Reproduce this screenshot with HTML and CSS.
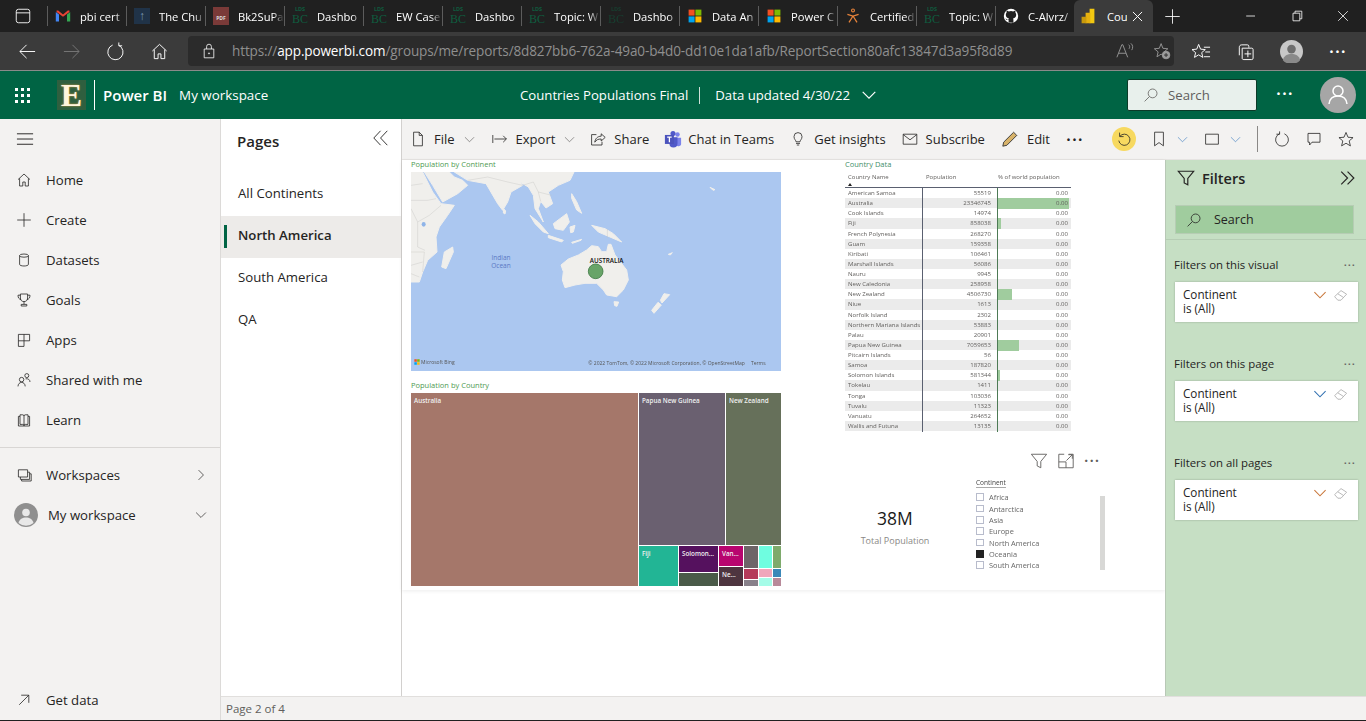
FILE: index.html
```html
<!DOCTYPE html>
<html lang="en">
<head>
    <meta charset="UTF-8">
    <meta name="viewport" content="width=device-width, initial-scale=1.0">
    <title>Countries Populations Final - Power BI</title>
    <link rel="stylesheet" href="styles.css">
</head>
<body>
    <svg class="sprite" xmlns="http://www.w3.org/2000/svg">
        <symbol id="i-home" viewBox="0 0 20 20"><path d="M2.5 9.5 10 2.5l7.500 7M4.500 8v9.500h4v-5h3v5h4V8"/></symbol>
        <symbol id="i-plus" viewBox="0 0 20 20"><path d="M10 1.500v17M1.500 10h17"/></symbol>
        <symbol id="i-db" viewBox="0 0 20 20"><ellipse cx="10" cy="4.500" rx="5.500" ry="2"/><path d="M4.500 4.500v11c0 1.200 2.500 2 5.500 2s5.500-.8 5.500-2v-11"/></symbol>
        <symbol id="i-trophy" viewBox="0 0 20 20"><path d="M5.500 2.500h9v5c0 3-2 4.500-4.500 4.500S5.500 10.500 5.500 7.500zM5.500 4H2.500c0 3 1 5 4 5.500M14.500 4h3c0 3-1 5-4 5.500M10 12v3M6.500 15.500h7v2h-7z"/></symbol>
        <symbol id="i-apps" viewBox="0 0 20 20"><path d="M3 3h14v8H10v7H3zM3 11h7M10 3v8"/></symbol>
        <symbol id="i-shared" viewBox="0 0 20 20"><circle cx="13.500" cy="4.500" r="2.500"/><circle cx="7" cy="9.500" r="2.800"/><path d="M2.500 18c0-3 2-5 4.500-5s4.500 2 4.500 5M12 8.500c3-.5 5.500 1 5.500 4"/></symbol>
        <symbol id="i-book" viewBox="0 0 20 20"><path d="M5 3.500h3.500c.8 0 1.500.5 1.500 1.500v12c0-1-.7-1.500-1.500-1.500H5zM15 3.500h-3.500c-.8 0-1.500.5-1.500 1.500M15 3.500v12h-3.500c-.8 0-1.500.5-1.500 1.500M5 5.500H3V17.500h14V5.500h-2"/></symbol>
        <symbol id="i-work" viewBox="0 0 20 20"><path d="M3 3.500h11.500v9H3zM5.500 12.500v3H17v-9h-2.500M7 15.500v2h12v-9h-2"/></symbol>
        <symbol id="i-getdata" viewBox="0 0 20 20"><path d="M4 16 16 4M6.500 4H16v9.500"/></symbol>
        <symbol id="i-right" viewBox="0 0 20 20"><path d="M6.500 3 13.500 10l-7 7"/></symbol>
        <symbol id="i-down" viewBox="0 0 20 20"><path d="M3 6.500 10 13.500l7-7"/></symbol>
        <symbol id="i-left2" viewBox="0 0 20 20"><path d="M9.500 2 2 10l7.500 8M17 2 9.500 10l7.500 8"/></symbol>
        <symbol id="i-right2" viewBox="0 0 20 20"><path d="M2.500 3 9.500 10l-7 7M9.500 3 16.500 10l-7 7"/></symbol>
        <symbol id="i-file" viewBox="0 0 20 20"><path d="M4.500 1.500h7l4 4v13h-11zM11.500 1.500v4h4"/></symbol>
        <symbol id="i-export" viewBox="0 0 20 20"><path d="M1 5v10M3 10h15M14 6l4 4-4 4"/></symbol>
        <symbol id="i-share" viewBox="0 0 20 20"><path d="M14 3.500 19 8l-5 4.500V10c-4 0-6 1-8 4 .5-4.500 3.500-7.500 8-7.500zM8 4.500H2v13h13v-4"/></symbol>
        <symbol id="i-bulb" viewBox="0 0 20 20"><path d="M7.500 13.500c0-2-2.500-3-2.500-6.500a5 5 0 0 1 10 0c0 3.500-2.500 4.500-2.500 6.500zM7.500 15.500h5M8.500 17.500h3"/></symbol>
        <symbol id="i-mail" viewBox="0 0 20 20"><path d="M1.500 4h17v12.500h-17zM1.500 4.500 10 11l8.500-6.500"/></symbol>
        <symbol id="i-undo" viewBox="0 0 20 20"><path d="M5 6.500A7 7 0 1 1 3.500 12M4.500 2v5h5"/></symbol>
        <symbol id="i-bookmark" viewBox="0 0 20 20"><path d="M4.500 1.500h11v17L10 14.500l-5.500 4z"/></symbol>
        <symbol id="i-rect" viewBox="0 0 20 20"><path d="M2 4h16v12.500H2z"/></symbol>
        <symbol id="i-refresh" viewBox="0 0 20 20"><path d="M13 3.500a8 8 0 1 1-6 0M7 .5v3.500h-4"/></symbol>
        <symbol id="i-comment" viewBox="0 0 20 20"><path d="M2.500 3h15v11h-10l-3 3.500V14h-2z"/></symbol>
        <symbol id="i-star" viewBox="0 0 20 20"><path d="M10 1.800 12.500 7.800l6.300.5-4.800 4.100 1.500 6.200L10 15.300l-5.500 3.300L6 12.400 1.200 8.300l6.300-.5z"/></symbol>
        <symbol id="i-funnel" viewBox="0 0 20 20"><path d="M1.500 2.500h17l-6.500 8v7l-4-2v-5z"/></symbol>
        <symbol id="i-search" viewBox="0 0 20 20"><circle cx="12" cy="8" r="5.500"/><path d="M8 12 2 18"/></symbol>
        <symbol id="i-eraser" viewBox="0 0 20 20"><path d="M2 12 10 4.500l7 4.500-7 7.500H6zM6 8.500l7 4.500"/></symbol>
        <symbol id="i-expand" viewBox="0 0 20 20"><path d="M8 2.500H2v15h16v-15h-5M2 11h8v6.500M10.500 9.500 17 3M12.500 3H17v4.500"/></symbol>
        <symbol id="i-back" viewBox="0 0 20 20"><path d="M18 10H2M9 3l-7 7 7 7"/></symbol>
        <symbol id="i-fwd" viewBox="0 0 20 20"><path d="M2 10h16M11 3l7 7-7 7"/></symbol>
        <symbol id="i-reload" viewBox="0 0 20 20"><path d="M13.500 3.500a8 8 0 1 1-6.500-.3M13.500 .5v3.500h3.500"/></symbol>
        <symbol id="i-lock" viewBox="0 0 20 20"><path d="M4 7.500h12v11H4zM7 7.500V4.500a3 3 0 0 1 6 0v3"/><circle cx="10" cy="13" r=".7"/></symbol>
        <symbol id="i-favadd" viewBox="0 0 20 20"><path d="M9 1.800 11 7l5.500.5-4.200 3.500 1.300 5.400L9 13.500l-4.600 2.900 1.300-5.400L1.500 7.500 7 7z"/><circle fill="#9b9b9b" cx="14.500" cy="14.500" r="4.200"/><path stroke="#2b2b2b" d="M14.500 12.300v4.400M12.300 14.500h4.400"/></symbol>
        <symbol id="i-favs" viewBox="0 0 20 20"><path d="M7 2.500 9 7.500l5 .5-3.800 3.200 1.200 5L7 13.500l-4.400 2.700 1.200-5L0 8l5-.5zM12.500 5.500H19M14 10.500h5M12.500 15.500H19"/></symbol>
        <symbol id="i-coll" viewBox="0 0 20 20"><path d="M6 3h6c1 0 1.500.5 1.500 1.500V6M3.500 14V5.500C3.500 4 4.500 3 6 3M6.500 6.500h10c1 0 1.500.5 1.500 1.500v9c0 1-.5 1.500-1.500 1.500h-8C7 18.500 6.500 18 6.500 17zM12.500 9v7M9 12.500h7"/></symbol>
        <symbol id="i-read" viewBox="0 0 20 20"><path d="M1 17 6.500 3h1L13 17M3 12.500h8M14 3c1.500 1 1.500 3 .5 4.500M16.500 1.500c2.500 2 2.500 5 1 7.500"/></symbol>
        <symbol id="i-tabs" viewBox="0 0 20 20"><path d="M5 2.500h10A2.500 2.500 0 0 1 17.500 5v10a2.500 2.500 0 0 1-2.500 2.500H5A2.500 2.500 0 0 1 2.500 15V5A2.500 2.500 0 0 1 5 2.500zM2.500 6.500h15"/></symbol>
        <symbol id="i-ms" viewBox="0 0 20 20"><path fill="#f25022" stroke="none" d="M2 2h7.500v7.500H2z"/><path fill="#7fba00" stroke="none" d="M10.500 2H18v7.500h-7.500z"/><path fill="#00a4ef" stroke="none" d="M2 10.500h7.500V18H2z"/><path fill="#ffb900" stroke="none" d="M10.500 10.500H18V18h-7.500z"/></symbol>
    </svg>

    <div class="tabbar">
        <svg class="ic tab-actions"><use href="#i-tabs"/></svg>
        <div class="tab">
            <svg class="favicon" viewBox="0 0 20 20"><path fill="#ea4335" d="M2 5l8 6 8-6v-2l-2 0-6 5-6-5-2 0z"/><path fill="#4285f4" d="M1 5v12h4V8z"/><path fill="#34a853" d="M15 8v9h4V5z"/></svg>
            <span class="tab-text">pbi cert</span>
        </div>
        <div class="tab">
            <span class="fav-church">&#8593;</span>
            <span class="tab-text">The Chu</span>
        </div>
        <div class="tab">
            <span class="fav-pdf">PDF</span>
            <span class="tab-text">Bk2SuPa</span>
        </div>
        <div class="tab"><span class="fav-lds"><b>LDS</b><i>BC</i></span><span class="tab-text">Dashbo</span></div>
        <div class="tab"><span class="fav-lds"><b>LDS</b><i>BC</i></span><span class="tab-text">EW Case</span></div>
        <div class="tab"><span class="fav-lds"><b>LDS</b><i>BC</i></span><span class="tab-text">Dashbo</span></div>
        <div class="tab"><span class="fav-lds"><b>LDS</b><i>BC</i></span><span class="tab-text">Topic: W</span></div>
        <div class="tab"><span class="fav-lds dim"><b>LDS</b><i>BC</i></span><span class="tab-text">Dashbo</span></div>
        <div class="tab"><svg class="favicon"><use href="#i-ms"/></svg><span class="tab-text">Data An</span></div>
        <div class="tab"><svg class="favicon"><use href="#i-ms"/></svg><span class="tab-text">Power C</span></div>
        <div class="tab">
            <svg class="favicon" viewBox="0 0 20 20"><circle cx="10" cy="3" r="1.800" fill="none" stroke="#e8833a" stroke-width="1.400"/><path fill="none" stroke="#e8833a" stroke-width="1.600" d="M3 8l7 2 7-2M10 10l-5 8M10 10l5 8"/></svg>
            <span class="tab-text">Certified</span>
        </div>
        <div class="tab"><span class="fav-lds"><b>LDS</b><i>BC</i></span><span class="tab-text">Topic: W</span></div>
        <div class="tab">
            <svg class="favicon" viewBox="0 0 20 20"><circle cx="10" cy="10" r="9" fill="#fff"/><path fill="#202020" d="M7 18v-3c-3 .5-3.500-1-4-2 2 .5 2 2 4 1.500 0-1 .5-1.500.5-1.500-2.500-.5-4-1.500-4-4.500 0-1 .5-2 1-2.500-.2-.8-.2-1.800.2-2.500 1 0 2 .7 2.500 1a7 7 0 0 1 5.600 0c.5-.3 1.500-1 2.500-1 .4.700.4 1.700.2 2.500.5.500 1 1.500 1 2.500 0 3-1.500 4-4 4.500 0 0 .5.500.5 1.500v4z"/></svg>
            <span class="tab-text">C-Alvrz/</span>
        </div>
        <div class="tab tab-active">
            <svg class="favicon" viewBox="0 0 20 20"><path fill="#f2c811" d="M12 1h6v18h-6z"/><path fill="#e6b10f" d="M7 6h6v13H7z"/><path fill="#c99a0c" d="M2 11h6v8H2z"/></svg>
            <span class="tab-text">Cou</span>
            <svg class="ic tab-close" viewBox="0 0 20 20"><path d="M3 3l14 14M17 3 3 17"/></svg>
        </div>
        <svg class="ic new-tab"><use href="#i-plus"/></svg>
        <div class="window-btns">
            <svg class="ic" viewBox="0 0 20 20"><path d="M4 10h11"/></svg>
            <svg class="ic" viewBox="0 0 20 20"><path d="M5 6.500h8.500V16H5zM7.500 6.500V4h8.500v9.500h-2.500"/></svg>
            <svg class="ic" viewBox="0 0 20 20"><path d="M4 4l12 12M16 4 4 16"/></svg>
        </div>
    </div>

    <div class="addressbar">
        <svg class="ic nav-btn"><use href="#i-back"/></svg>
        <svg class="ic nav-btn off"><use href="#i-fwd"/></svg>
        <svg class="ic nav-btn"><use href="#i-reload"/></svg>
        <svg class="ic nav-btn"><use href="#i-home"/></svg>
        <div class="urlbox">
            <svg class="ic lock"><use href="#i-lock"/></svg>
            <span class="url"><span>https://</span><b>app.powerbi.com</b><span>/groups/me/reports/8d827bb6-762a-49a0-b4d0-dd10e1da1afb/ReportSection80afc13847d3a95f8d89</span></span>
            <svg class="ic url-ic"><use href="#i-read"/></svg>
            <svg class="ic url-ic"><use href="#i-favadd"/></svg>
        </div>
        <svg class="ic bar-ic"><use href="#i-favs"/></svg>
        <svg class="ic bar-ic"><use href="#i-coll"/></svg>
        <svg class="bar-avatar" viewBox="0 0 24 24"><circle cx="12" cy="12" r="12" fill="#c8c8c8"/><circle cx="12" cy="9.500" r="4.500" fill="#6e6e6e"/><path fill="#8a8a8a" d="M3 21c1-5 5-6.500 9-6.500s8 1.500 9 6.500a12 12 0 0 1-18 0z"/></svg>
        <span class="bar-dots">&#183;&#183;&#183;</span>
    </div>

    <header class="appbar">
        <div class="waffle">
            <i></i><i></i><i></i><i></i><i></i><i></i><i></i><i></i><i></i>
        </div>
        <div class="org-logo"><span>E</span></div>
        <span class="brand">Power BI</span>
        <span class="crumb">My workspace</span>
        <div class="report-name">
            <span>Countries Populations Final</span>
            <span class="name-sep"></span>
            <span>Data updated 4/30/22</span>
            <svg class="ic"><use href="#i-down"/></svg>
        </div>
        <div class="app-search">
            <svg class="ic"><use href="#i-search"/></svg>
            <span>Search</span>
        </div>
        <span class="app-dots">&#183;&#183;&#183;</span>
        <svg class="app-avatar" viewBox="0 0 36 36"><circle cx="18" cy="18" r="18" fill="#a6a6a6"/><circle cx="18" cy="14" r="5" fill="none" stroke="#fff" stroke-width="1.500"/><path fill="none" stroke="#fff" stroke-width="1.500" d="M9 27c.5-5 4-8 9-8s8.500 3 9 8"/></svg>
    </header>

    <div class="workarea">
        <nav class="leftnav">
            <svg class="ic burger" viewBox="0 0 20 20"><path d="M1 4h17M1 9.500h17M1 15h17"/></svg>
            <a class="nav-item"><svg class="ic"><use href="#i-home"/></svg>Home</a>
            <a class="nav-item"><svg class="ic"><use href="#i-plus"/></svg>Create</a>
            <a class="nav-item"><svg class="ic"><use href="#i-db"/></svg>Datasets</a>
            <a class="nav-item"><svg class="ic"><use href="#i-trophy"/></svg>Goals</a>
            <a class="nav-item"><svg class="ic"><use href="#i-apps"/></svg>Apps</a>
            <a class="nav-item"><svg class="ic"><use href="#i-shared"/></svg>Shared with me</a>
            <a class="nav-item"><svg class="ic"><use href="#i-book"/></svg>Learn</a>
            <div class="nav-divider"></div>
            <a class="nav-item"><svg class="ic"><use href="#i-work"/></svg>Workspaces<svg class="ic nav-chev"><use href="#i-right"/></svg></a>
            <a class="nav-item"><svg class="nav-avatar" viewBox="0 0 24 24"><circle cx="12" cy="12" r="12" fill="#8f8f8f"/><circle cx="12" cy="9.500" r="3.800" fill="#e8e8e8"/><path fill="#e8e8e8" d="M4.500 20c1-4 4-5.500 7.500-5.500s6.500 1.500 7.500 5.500a12 12 0 0 1-15 0z"/></svg>My workspace<svg class="ic nav-chev"><use href="#i-down"/></svg></a>
            <a class="nav-item nav-bottom"><svg class="ic"><use href="#i-getdata"/></svg>Get data</a>
        </nav>

        <div class="rightcol">
            <div class="panes">
                <aside class="pages">
                    <div class="pages-head">
                        <span>Pages</span>
                        <svg class="ic"><use href="#i-left2"/></svg>
                    </div>
                    <a class="page-item">All Continents</a>
                    <a class="page-item active">North America</a>
                    <a class="page-item">South America</a>
                    <a class="page-item">QA</a>
                </aside>

                <div class="contentcol">
                    <div class="toolbar">
                        <a class="tool"><svg class="ic"><use href="#i-file"/></svg>File<svg class="ic tool-chev"><use href="#i-down"/></svg></a>
                        <a class="tool"><svg class="ic"><use href="#i-export"/></svg>Export<svg class="ic tool-chev"><use href="#i-down"/></svg></a>
                        <a class="tool tool-share"><svg class="ic"><use href="#i-share"/></svg>Share</a>
                        <a class="tool tool-teams">
                            <svg class="teams" viewBox="0 0 20 20"><circle cx="15" cy="5" r="2.500" fill="#7b83eb"/><path fill="#7b83eb" d="M11 8.500h8v6a3 3 0 0 1-6 1z"/><circle cx="10" cy="4" r="2.800" fill="#5059c9"/><path fill="#5059c9" d="M6 8h9v7a4 4 0 0 1-9 0z"/><path fill="#4b53bc" d="M1 5.500h10v10H1z"/><path fill="none" stroke="#fff" stroke-width="1.400" d="M3.500 8H8.500M6 8v5.500"/></svg>
                            Chat in Teams
                        </a>
                        <a class="tool"><svg class="ic"><use href="#i-bulb"/></svg>Get insights</a>
                        <a class="tool"><svg class="ic"><use href="#i-mail"/></svg>Subscribe</a>
                        <a class="tool">
                            <svg class="pencil" viewBox="0 0 20 20"><path fill="#d8b36a" stroke="#333" d="M14 2.500 17.500 6 6.500 17 2 18l1-4.500z"/></svg>
                            Edit
                        </a>
                        <span class="tool-dots">&#183;&#183;&#183;</span>
                        <div class="toolbar-right">
                            <span class="undo"><svg class="ic"><use href="#i-undo"/></svg></span>
                            <svg class="ic"><use href="#i-bookmark"/></svg>
                            <svg class="ic tool-chev blue"><use href="#i-down"/></svg>
                            <svg class="ic"><use href="#i-rect"/></svg>
                            <svg class="ic tool-chev blue"><use href="#i-down"/></svg>
                            <span class="tool-sep"></span>
                            <svg class="ic"><use href="#i-refresh"/></svg>
                            <svg class="ic"><use href="#i-comment"/></svg>
                            <svg class="ic"><use href="#i-star"/></svg>
                        </div>
                    </div>

                    <div class="report-row">
                        <main class="canvas">
                            <div class="page-sheet">
                                <section class="col-left">
                                    <div class="visual-title">Population by Continent</div>
                                    <div class="map">
                                        <svg viewBox="18 51 1110 597" preserveAspectRatio="none">
                                            <rect x="18" y="51" width="1110" height="597" fill="#abc7f0"/>
                                            <g class="land">
                                                <path d="M18 51H53L68 81 83 111 108 146 148 151 128 181 103 216 93 246 96 291 68 316 53 351 43 381H18z"/>
                                                <path d="M58 51 83 91 113 141 158 116 188 91 173 76 148 66 133 51z"/>
                                                <path d="M148 51 188 76 243 86 278 146 293 166 308 141 318 111 353 91 345 81 370 96 385 121 390 161 415 201 400 161 407 139 423 159 443 146 430 111 460 91 495 76 507 51z"/>
                                                <path d="M143 276 145 291 123 341 110 336 118 291z"/>
                                                <path d="M296 161 302 168 300 177 295 174z"/>
                                                <path d="M375 181 400 201 430 236 415 231 390 206z"/>
                                                <path d="M430 241 475 256 470 261 430 248z"/>
                                                <path d="M445 206 485 176 493 201 475 226 450 221z"/>
                                                <path d="M495 216 510 211 505 231 497 233z"/>
                                                <path d="M500 116 515 140 530 175 515 165 500 130z"/>
                                                <path d="M560 211 600 221 625 236 650 261 615 246 580 231z"/>
                                                <path d="M468 330 490 312 520 300 545 285 560 272 580 275 590 290 605 290 610 268 618 268 630 300 665 345 670 375 655 405 635 425 605 420 595 405 575 385 540 385 510 390 480 398 472 375 475 350z"/>
                                                <path d="M627 440 641 441 636 454 629 452z"/>
                                                <path d="M777 416 794 419 771 444 766 436z"/>
                                                <path d="M759 442 769 450 747 475 740 466z"/>
                                                <path d="M915 97 930 104 924 106z"/>
                                                <path d="M790 298 802 293 796 300z"/>
                                                <path d="M500 262 530 253 528 256 502 265z"/>
                                            </g>
                                            <g class="borders">
                                                <path d="M18 91 53 86M18 136H68L93 131M38 201 73 181 108 151M18 161 38 201 38 276 60 286M18 291H58L53 351M18 331 53 321M18 356 43 366"/>
                                                <path d="M188 76 248 66 308 81 353 91M353 91 385 81 400 111 440 121M400 111 407 139M607 222V250"/>
                                            </g>
                                            <ellipse cx="56" cy="208" rx="6" ry="7" fill="#8fb4e8"/>
                                            <text class="map-ocean" x="288" y="315" text-anchor="middle">Indian</text>
                                            <text class="map-ocean" x="288" y="338" text-anchor="middle">Ocean</text>
                                            <text class="map-label" x="605" y="325" text-anchor="middle">AUSTRALIA</text>
                                            <circle cx="572" cy="349" r="22" fill="#68a468" stroke="#3f7a44" stroke-width="2.500"/>
                                            <use href="#i-ms" x="26" y="611" width="20" height="20"/>
                                            <text class="map-small" x="48" y="626">Microsoft Bing</text>
                                            <text class="map-small" x="550" y="630">&#169; 2022 TomTom, &#169; 2022 Microsoft Corporation, &#169; OpenStreetMap</text>
                                            <text class="map-small" x="1038" y="630">Terms</text>
                                        </svg>
                                    </div>
                                    <div class="visual-title second">Population by Country</div>
                                    <div class="treemap">
                                        <div class="tile t-australia"><span>Australia</span></div>
                                        <div class="tm-right">
                                            <div class="tm-top">
                                                <div class="tile t-png"><span>Papua New Guinea</span></div>
                                                <div class="tile t-nz"><span>New Zealand</span></div>
                                            </div>
                                            <div class="tm-bottom">
                                                <div class="tile t-fiji"><span>Fiji</span></div>
                                                <div class="tm-stack t-w40">
                                                    <div class="tile t-solomon"><span>Solomon...</span></div>
                                                    <div class="tile t-samoa"></div>
                                                </div>
                                                <div class="tm-stack t-w24">
                                                    <div class="tile t-van"><span>Van...</span></div>
                                                    <div class="tile t-ne"><span>Ne...</span></div>
                                                </div>
                                                <div class="tm-stack t-w15">
                                                    <div class="tile t-a"></div>
                                                    <div class="tile t-b"></div>
                                                    <div class="tile t-c"></div>
                                                </div>
                                                <div class="tm-stack t-w13">
                                                    <div class="tile t-d"></div>
                                                    <div class="tile t-e"></div>
                                                    <div class="tile t-f"></div>
                                                </div>
                                                <div class="tm-stack t-w8">
                                                    <div class="tile t-g"></div>
                                                    <div class="tile t-h"></div>
                                                    <div class="tile t-i"></div>
                                                </div>
                                            </div>
                                        </div>
                                    </div>
                                </section>

                                <section class="col-right">
                                    <div class="visual-title teal">Country Data</div>
                                    <div class="table-head">
                                        <span>Country Name</span><span>Population</span><span>% of world population</span>
                                        <i class="sort-arrow"></i>
                                    </div>
                                    <div class="table-body">
                                        <div class="row"><span>American Samoa</span><span>55519</span><span class="pct">0.00</span></div>
                                        <div class="row"><span>Australia</span><span>23346745</span><span class="pct"><i class="bar" style="width:71px"></i>0.00</span></div>
                                        <div class="row"><span>Cook Islands</span><span>14974</span><span class="pct">0.00</span></div>
                                        <div class="row"><span>Fiji</span><span>858038</span><span class="pct"><i class="bar" style="width:3px"></i>0.00</span></div>
                                        <div class="row"><span>French Polynesia</span><span>268270</span><span class="pct">0.00</span></div>
                                        <div class="row"><span>Guam</span><span>159358</span><span class="pct">0.00</span></div>
                                        <div class="row"><span>Kiribati</span><span>106461</span><span class="pct">0.00</span></div>
                                        <div class="row"><span>Marshall Islands</span><span>56086</span><span class="pct">0.00</span></div>
                                        <div class="row"><span>Nauru</span><span>9945</span><span class="pct">0.00</span></div>
                                        <div class="row"><span>New Caledonia</span><span>258958</span><span class="pct">0.00</span></div>
                                        <div class="row"><span>New Zealand</span><span>4506730</span><span class="pct"><i class="bar" style="width:14px"></i>0.00</span></div>
                                        <div class="row"><span>Niue</span><span>1613</span><span class="pct">0.00</span></div>
                                        <div class="row"><span>Norfolk Island</span><span>2302</span><span class="pct">0.00</span></div>
                                        <div class="row"><span>Northern Mariana Islands</span><span>53883</span><span class="pct">0.00</span></div>
                                        <div class="row"><span>Palau</span><span>20901</span><span class="pct">0.00</span></div>
                                        <div class="row"><span>Papua New Guinea</span><span>7059653</span><span class="pct"><i class="bar" style="width:21px"></i>0.00</span></div>
                                        <div class="row"><span>Pitcairn Islands</span><span>56</span><span class="pct">0.00</span></div>
                                        <div class="row"><span>Samoa</span><span>187820</span><span class="pct">0.00</span></div>
                                        <div class="row"><span>Solomon Islands</span><span>581344</span><span class="pct"><i class="bar" style="width:2px"></i>0.00</span></div>
                                        <div class="row"><span>Tokelau</span><span>1411</span><span class="pct">0.00</span></div>
                                        <div class="row"><span>Tonga</span><span>103036</span><span class="pct">0.00</span></div>
                                        <div class="row"><span>Tuvalu</span><span>11323</span><span class="pct">0.00</span></div>
                                        <div class="row"><span>Vanuatu</span><span>264652</span><span class="pct">0.00</span></div>
                                        <div class="row"><span>Wallis and Futuna</span><span>13135</span><span class="pct">0.00</span></div>
                                    </div>
                                    <div class="visual-actions">
                                        <svg class="ic"><use href="#i-funnel"/></svg>
                                        <svg class="ic"><use href="#i-expand"/></svg>
                                        <span>&#183;&#183;&#183;</span>
                                    </div>
                                    <div class="bottom-row">
                                        <div class="kpi">
                                            <div class="kpi-value">38M</div>
                                            <div class="kpi-label">Total Population</div>
                                        </div>
                                        <div class="slicer">
                                            <div class="slicer-list">
                                                <div class="slicer-title"><span>Continent</span></div>
                                                <label class="slicer-item"><i></i>Africa</label>
                                                <label class="slicer-item"><i></i>Antarctica</label>
                                                <label class="slicer-item"><i></i>Asia</label>
                                                <label class="slicer-item"><i></i>Europe</label>
                                                <label class="slicer-item"><i></i>North America</label>
                                                <label class="slicer-item on"><i></i>Oceania</label>
                                                <label class="slicer-item"><i></i>South America</label>
                                            </div>
                                            <div class="slicer-scroll"></div>
                                        </div>
                                    </div>
                                </section>
                            </div>
                        </main>

                        <aside class="filters">
                            <div class="filters-head">
                                <svg class="ic"><use href="#i-funnel"/></svg>
                                <span>Filters</span>
                                <svg class="ic"><use href="#i-right2"/></svg>
                            </div>
                            <div class="filters-search">
                                <svg class="ic"><use href="#i-search"/></svg>
                                <span>Search</span>
                            </div>
                            <div class="filter-group first">
                                <div class="group-title"><span>Filters on this visual</span><b>&#183;&#183;&#183;</b></div>
                                <div class="filter-card">
                                    <div>Continent<br>is (All)</div>
                                    <svg class="ic chev-orange"><use href="#i-down"/></svg>
                                    <svg class="ic eraser"><use href="#i-eraser"/></svg>
                                </div>
                            </div>
                            <div class="filter-group">
                                <div class="group-title"><span>Filters on this page</span><b>&#183;&#183;&#183;</b></div>
                                <div class="filter-card">
                                    <div>Continent<br>is (All)</div>
                                    <svg class="ic chev-blue"><use href="#i-down"/></svg>
                                    <svg class="ic eraser"><use href="#i-eraser"/></svg>
                                </div>
                            </div>
                            <div class="filter-group">
                                <div class="group-title"><span>Filters on all pages</span><b>&#183;&#183;&#183;</b></div>
                                <div class="filter-card">
                                    <div>Continent<br>is (All)</div>
                                    <svg class="ic chev-orange"><use href="#i-down"/></svg>
                                    <svg class="ic eraser"><use href="#i-eraser"/></svg>
                                </div>
                            </div>
                        </aside>
                    </div>
                </div>
            </div>
            <footer class="statusbar">Page 2 of 4</footer>
        </div>
    </div>
</body>
</html>
```

FILE: styles.css
```css
* {
    box-sizing: border-box;
}

html, body {
    height: 100%;
}

body {
    margin: 0;
    width: 1366px;
    height: 721px;
    overflow: hidden;
    display: flex;
    flex-direction: column;
    font-family: "Open Sans", "Noto Sans", Arial, sans-serif;
    font-size: 13.2px;
    color: #252423;
    background-color: #fff;
    border-bottom: 1px solid #202020;
}

.sprite {
    display: none;
}

.ic {
    fill: none;
    stroke: currentColor;
    stroke-width: 1;
    width: 16px;
    height: 16px;
    flex: none;
}

/* browser tab strip */
.tabbar {
    height: 32px;
    flex: none;
    display: flex;
    align-items: center;
    padding-left: 47px;
    background-color: #202020;
    color: #fff;
    position: relative;
}

.tab-actions {
    position: absolute;
    left: 14px;
    top: 7px;
    width: 18px;
    height: 18px;
}

.tab {
    width: 79px;
    height: 32px;
    flex: none;
    display: flex;
    align-items: center;
    gap: 9px;
    padding-left: 8px;
    position: relative;
    overflow: hidden;
    font-size: 11.2px;
    white-space: nowrap;
}

.tab::before {
    content: "";
    position: absolute;
    left: 0;
    top: 6px;
    width: 1px;
    height: 20px;
    background-color: #5c5c5c;
}

.tab-text {
    overflow: hidden;
    width: 46px;
    flex: none;
    -webkit-mask-image: linear-gradient(to right, #000 76%, transparent);
    mask-image: linear-gradient(to right, #000 76%, transparent);
}

.favicon {
    width: 16px;
    height: 16px;
    flex: none;
}

.fav-church {
    width: 16px;
    height: 16px;
    flex: none;
    background-color: #203348;
    color: #7c98b0;
    font-size: 12px;
    line-height: 16px;
    text-align: center;
}

.fav-pdf {
    width: 16px;
    height: 18px;
    flex: none;
    background-color: #7a3a38;
    color: #ddd;
    font-size: 5px;
    font-weight: bold;
    line-height: 22px;
    text-align: center;
}

.fav-lds {
    width: 16px;
    flex: none;
    color: #0f5c3f;
    text-align: center;
    line-height: 1;
}

.fav-lds b {
    display: block;
    font-size: 5.500px;
}

.fav-lds i {
    display: block;
    font-family: "Liberation Serif", serif;
    font-style: normal;
    font-size: 12px;
}

.fav-lds.dim {
    opacity: 0.5;
}

.tab-active {
    padding-left: 6px;
    gap: 11px;
    border-radius: 6px 6px 0 0;
    background-color: #3b3b3b;
}

.tab-active::before {
    display: none;
}

.tab-active .tab-text {
    width: 20px;
    -webkit-mask-image: none;
    mask-image: none;
}

.tab-close {
    width: 13px;
    height: 13px;
    margin-left: -7px;
    stroke-width: 1.500;
}

.new-tab {
    margin-left: 11px;
    width: 17px;
    height: 17px;
}

.window-btns {
    margin-left: auto;
    display: flex;
    width: 138px;
}

.window-btns .ic {
    width: 46px;
    height: 16px;
}

/* address bar */
.addressbar {
    height: 39px;
    flex: none;
    display: flex;
    align-items: center;
    background-color: #3b3b3b;
    border-bottom: 1px solid #8a8a8a;
    color: #fff;
    padding-left: 18px;
}

.nav-btn {
    width: 19px;
    height: 19px;
    margin-right: 25px;
}

.nav-btn.off {
    color: #777;
}

.urlbox {
    width: 986px;
    height: 30px;
    margin-left: -6px;
    display: flex;
    align-items: center;
    padding-left: 13px;
    border-radius: 4px;
    background-color: #2b2b2b;
}

.url {
    margin-left: 15px;
    width: 884px;
    flex: none;
    white-space: nowrap;
    font-size: 13.55px;
    letter-spacing: -0.13px;
    color: #8f8f8f;
}

.url b {
    font-weight: normal;
    color: #fff;
}

.url-ic {
    width: 18px;
    height: 18px;
    margin-right: 19px;
    color: #9b9b9b;
}

.bar-ic {
    width: 19px;
    height: 19px;
    margin-left: 18px;
    margin-right: 7px;
}

.bar-avatar {
    width: 23px;
    height: 23px;
    margin-left: 18px;
}

.bar-dots,
.app-dots,
.tool-dots {
    font-size: 18px;
    font-weight: 600;
    letter-spacing: 1px;
    line-height: 1;
}

.bar-dots {
    margin-left: 26px;
}

/* power bi header */
.appbar {
    height: 48px;
    flex: none;
    display: flex;
    align-items: center;
    background-color: #006444;
    color: #fff;
    padding-left: 15px;
    position: relative;
}

.waffle {
    display: grid;
    grid-template-columns: repeat(3, 3px);
    gap: 3px;
    width: 15px;
}

.waffle i {
    height: 3px;
    background-color: #fff;
}

.org-logo {
    width: 29px;
    height: 30px;
    margin-left: 27px;
    display: flex;
    align-items: center;
    justify-content: center;
    background-color: #2f5f3f;
}

.org-logo span {
    font-family: "Liberation Serif", serif;
    font-size: 32px;
    font-weight: bold;
    line-height: 1;
    color: #fff5dc;
    text-shadow: 0 0 2px #e0a040;
}

.brand {
    margin-left: 8px;
    padding-left: 8px;
    border-left: 1px solid #fff;
    height: 30px;
    line-height: 30px;
    font-size: 15px;
    font-weight: 600;
}

.crumb {
    margin-left: 12px;
    font-size: 13.400px;
}

.report-name {
    position: absolute;
    left: 520px;
    top: 0;
    height: 48px;
    display: flex;
    align-items: center;
    font-size: 13.200px;
    white-space: nowrap;
}

.name-sep {
    width: 1px;
    height: 17px;
    margin: 0 15px 0 11px;
    background-color: #cfe0d8;
}

.report-name .ic {
    margin-left: 10px;
    width: 18px;
    height: 18px;
    stroke-width: 1.300;
}

.app-search {
    position: absolute;
    left: 1127px;
    top: 8px;
    width: 130px;
    height: 32px;
    display: flex;
    align-items: center;
    gap: 9px;
    padding-left: 15px;
    background-color: #e8f0ec;
    border: 1px solid #0c3a28;
    border-radius: 2px;
    color: #605e5c;
}

.app-dots {
    position: absolute;
    left: 1276px;
    top: 13px;
}

.app-avatar {
    position: absolute;
    left: 1320px;
    top: 6px;
    width: 36px;
    height: 36px;
}

/* main area */
.workarea {
    flex: 1;
    display: flex;
    min-height: 0;
}

.leftnav {
    width: 221px;
    flex: none;
    display: flex;
    flex-direction: column;
    padding-top: 11px;
    background-color: #f3f2f1;
    border-right: 1px solid #dcdad8;
}

.burger {
    margin: 0 0 11px 16px;
    width: 19px;
    height: 19px;
}

.nav-item {
    height: 40px;
    flex: none;
    display: flex;
    align-items: center;
    gap: 14px;
    padding-left: 16px;
    padding-right: 12px;
    white-space: nowrap;
}

.nav-chev {
    margin-left: auto;
    width: 14px;
    height: 14px;
}

.nav-avatar {
    width: 24px;
    height: 24px;
    margin-left: -2px;
    margin-right: -4px;
}

.nav-divider {
    margin: 7px 0;
    height: 1px;
    background-color: #d8d6d4;
}

.nav-bottom {
    margin-top: auto;
}

.rightcol {
    flex: 1;
    min-width: 0;
    display: flex;
    flex-direction: column;
}

.panes {
    flex: 1;
    min-height: 0;
    display: flex;
}

.pages {
    width: 181px;
    flex: none;
    background-color: #fff;
    border-right: 1px solid #d2d0ce;
}

.pages-head {
    height: 55px;
    padding: 0 11px 11px 16px;
    display: flex;
    align-items: center;
    justify-content: space-between;
    font-size: 15px;
    font-weight: 600;
}

.pages-head .ic {
    width: 18px;
    height: 18px;
    margin-top: -6px;
}

.page-item {
    display: flex;
    align-items: center;
    height: 42px;
    padding: 0 0 4px 17px;
    position: relative;
}

.page-item.active {
    background-color: #edebe9;
    font-weight: 600;
}

.page-item.active::before {
    content: "";
    position: absolute;
    left: 3px;
    top: 9px;
    width: 3px;
    height: 23px;
    background-color: #006444;
}

.contentcol {
    flex: 1;
    min-width: 0;
    display: flex;
    flex-direction: column;
}

.toolbar {
    height: 41px;
    flex: none;
    display: flex;
    align-items: center;
    gap: 16px;
    padding-left: 8px;
    background-color: #f3f2f1;
    border-bottom: 1px solid #e6e4e2;
    font-size: 13px;
}

.tool {
    display: flex;
    align-items: center;
    gap: 8px;
    white-space: nowrap;
}

.tool-share {
    margin-left: -2px;
}

.tool-teams {
    margin-left: -1px;
    gap: 6px;
}

.tool-chev {
    width: 13px;
    height: 13px;
    color: #605e5c;
}

.tool-chev.blue {
    color: #3f7fc0;
}

.teams,
.pencil {
    width: 18px;
    height: 18px;
    flex: none;
}

.toolbar-right {
    margin-left: auto;
    padding-right: 12px;
    display: flex;
    align-items: center;
    gap: 15px;
}

.toolbar-right .tool-chev {
    margin-left: -6px;
}

.tool-sep ~ .ic {
    margin-left: 1px;
}

.undo {
    width: 24px;
    height: 24px;
    display: flex;
    align-items: center;
    justify-content: center;
    border-radius: 50%;
    background-color: #f7d960;
}

.tool-sep {
    width: 1px;
    height: 26px;
    background-color: #8a8886;
}

.report-row {
    flex: 1;
    min-height: 0;
    display: flex;
}

.canvas {
    flex: 1;
    min-width: 0;
    background-color: #fff;
}

.page-sheet {
    height: 430px;
    display: flex;
    gap: 64px;
    padding-left: 9px;
    box-shadow: 0 1px 4px rgba(0, 0, 0, 0.08);
}

.col-left {
    width: 370px;
    flex: none;
}

.col-right {
    width: 260px;
    flex: none;
}

.visual-title {
    height: 12px;
    font-size: 7.500px;
    line-height: 8px;
    color: #4f9a52;
}

.visual-title.second {
    margin-top: 10px;
}

.visual-title.teal {
    color: #3f8f6a;
}

.map {
    height: 199px;
}

.map svg {
    display: block;
    width: 100%;
    height: 100%;
    filter: blur(0.3px);
}

.land {
    fill: #f0efec;
    stroke: #f0efec;
    stroke-width: 3;
    stroke-linejoin: round;
}

.borders {
    fill: none;
    stroke: #c4c4c2;
    stroke-width: 1.200;
}

.map-ocean {
    font-family: "Open Sans", sans-serif;
    font-size: 19.500px;
    fill: #5a78c4;
}

.map-label {
    font-family: "Open Sans", sans-serif;
    font-size: 19px;
    font-weight: 600;
    fill: #111;
}

.map-small {
    font-family: "Open Sans", sans-serif;
    font-size: 15px;
    fill: #555;
}

/* treemap */
.treemap {
    height: 193px;
    display: flex;
    gap: 1px;
}

.tile {
    flex: 1;
    min-width: 0;
    min-height: 0;
    padding: 3px 0 0 3px;
    overflow: hidden;
    white-space: nowrap;
    font-size: 6.300px;
    font-weight: 600;
    color: #f0f0f0;
}

.t-australia {
    flex: none;
    width: 227px;
    background-color: #a5776a;
}

.tm-right {
    flex: 1;
    display: flex;
    flex-direction: column;
    gap: 1px;
}

.tm-top {
    height: 152px;
    display: flex;
    gap: 1px;
}

.t-png {
    flex: none;
    width: 86px;
    background-color: #6a6070;
}

.t-nz {
    background-color: #66705a;
}

.tm-bottom {
    flex: 1;
    min-height: 0;
    display: flex;
    gap: 1px;
}

.t-fiji {
    flex: none;
    width: 39px;
    background-color: #22b595;
}

.tm-stack {
    flex: none;
    display: flex;
    flex-direction: column;
    gap: 1px;
}

.t-w40 { width: 39px; }
.t-w24 { width: 24px; }
.t-w15 { width: 14px; }
.t-w13 { width: 13px; }
.t-w8 { width: 8px; }

.t-solomon {
    flex: none;
    height: 26px;
    background-color: #55115e;
}

.t-samoa { background-color: #4a5a48; }

.t-van {
    flex: none;
    height: 20px;
    background-color: #b8056f;
}

.t-ne { background-color: #4e3540; }
.t-a { flex: none; height: 22px; background-color: #6e6468; }
.t-b { flex: none; height: 10px; background-color: #b53a5a; }
.t-c { background-color: #88808a; }
.t-d { flex: none; height: 22px; background-color: #6ffde0; }
.t-e { flex: none; height: 8px; background-color: #f0a7bb; }
.t-f { background-color: #a5fce8; }
.t-g { flex: none; height: 22px; background-color: #7eaa6c; }
.t-h { flex: none; height: 8px; background-color: #3a88b8; }
.t-i { background-color: #b88a9a; }

/* country table */
.table-head,
.row {
    display: grid;
    grid-template-columns: 78px 75px 73px;
    width: 226px;
}

.table-head {
    height: 16px;
    position: relative;
    border-bottom: 1px solid #5a6070;
    font-size: 6px;
    line-height: 11px;
    color: #605e5c;
    filter: blur(0.25px);
}

.table-head span:nth-child(1),
.table-head span:nth-child(2) {
    padding-left: 3px;
}

.sort-arrow {
    position: absolute;
    left: 3px;
    bottom: 1px;
    width: 0;
    height: 0;
    border-left: 2.500px solid transparent;
    border-right: 2.500px solid transparent;
    border-bottom: 3px solid #222;
}

.table-body {
    filter: blur(0.3px);
}

.row {
    height: 10.130px;
    font-size: 6.050px;
    line-height: 11px;
    color: #605e5c;
}

.row:nth-child(even) {
    background-color: #ebebeb;
}

.row span:first-child {
    padding-left: 3px;
    white-space: nowrap;
    border-right: 1px solid #5a6070;
}

.row span:nth-child(2) {
    text-align: right;
    padding-right: 6px;
    border-right: 1px solid #4d7a55;
}

.pct {
    position: relative;
    z-index: 0;
    text-align: right;
    padding-right: 3px;
}

.bar {
    position: absolute;
    left: 0;
    top: 0;
    bottom: 0;
    background-color: #a0cc9e;
    z-index: -1;
}

.visual-actions {
    height: 16px;
    margin-top: 22px;
    padding-left: 185px;
    display: flex;
    align-items: center;
    gap: 9px;
    color: #605e5c;
}

.visual-actions .ic {
    width: 18px;
    height: 18px;
}

.visual-actions span {
    font-size: 16px;
    font-weight: 600;
    letter-spacing: 1px;
}

.bottom-row {
    display: flex;
    gap: 31px;
}

.kpi {
    width: 100px;
    flex: none;
    padding-top: 37px;
    text-align: center;
}

.kpi-value {
    font-size: 17.500px;
    line-height: 24px;
    color: #1a1a1a;
}

.kpi-label {
    margin-top: 5px;
    font-size: 9px;
    line-height: 12px;
    color: #8a8886;
}

.slicer {
    display: flex;
    width: 129px;
    padding-top: 10px;
}

.slicer-list {
    width: 124px;
    filter: blur(0.2px);
}

.slicer-title {
    height: 12.500px;
    font-size: 6.500px;
    line-height: 8px;
    color: #444;
}

.slicer-title span {
    display: inline-block;
    border-bottom: 1px solid #aaa;
}

.slicer-item {
    display: flex;
    align-items: center;
    gap: 5px;
    height: 11.350px;
    font-size: 7.400px;
    color: #666;
}

.slicer-item i {
    width: 8px;
    height: 7.500px;
    border: 1px solid #b8bccc;
    background-color: #fff;
}

.slicer-item.on i {
    background-color: #222;
    border-color: #222;
}

.slicer-scroll {
    width: 5px;
    height: 74px;
    margin-top: 17px;
    background-color: #d8d8d6;
}

/* filter pane */
.filters {
    width: 201px;
    flex: none;
    padding-top: 6px;
    background-color: #c6dfc4;
    border-left: 1px solid #b8c8b6;
}

.filters-head {
    height: 24px;
    display: flex;
    align-items: center;
    padding: 0 9px 0 11px;
    font-size: 14.500px;
    font-weight: 600;
}

.filters-head .ic {
    width: 18px;
    height: 18px;
    stroke-width: 1.300;
}

.filters-head span {
    margin-left: 7px;
    margin-right: auto;
}

.filters-search {
    margin: 15px 12px 0 9px;
    height: 29px;
    display: flex;
    align-items: center;
    gap: 12px;
    padding-left: 10px;
    font-size: 12.500px;
    background-color: #a0cc9e;
    border: 1px solid #b6cdb4;
}

.filter-group {
    padding: 0 8px 0 9px;
    margin-top: 34px;
}

.filter-group.first {
    margin-top: 5px;
    padding-top: 17px;
    border-top: 1px solid #b6cdb4;
}

.group-title {
    display: flex;
    justify-content: space-between;
    padding-right: 2px;
    margin-left: -1px;
    height: 20px;
    margin-bottom: 5px;
    font-size: 11.400px;
    line-height: 16px;
}

.group-title b {
    font-weight: 600;
    letter-spacing: 1px;
    color: #605e5c;
}

.filter-card {
    height: 40px;
    display: flex;
    align-items: flex-start;
    padding: 5px 9px 0 8px;
    background-color: #fff;
    box-shadow: 0 0 2px rgba(0, 0, 0, 0.25);
    font-size: 11.700px;
    line-height: 14px;
}

.filter-card > div {
    flex: 1;
}

.chev-orange,
.chev-blue {
    margin-right: 5px;
    stroke-width: 1.300;
}

.chev-orange {
    color: #c8763a;
}

.chev-blue {
    color: #2f6fb0;
}

.eraser {
    color: #a8a8a8;
}

.statusbar {
    height: 24px;
    flex: none;
    display: flex;
    align-items: center;
    padding-left: 5px;
    background-color: #f3f2f1;
    border-top: 1px solid #e1dfdd;
    font-size: 11.500px;
    color: #605e5c;
}
```
